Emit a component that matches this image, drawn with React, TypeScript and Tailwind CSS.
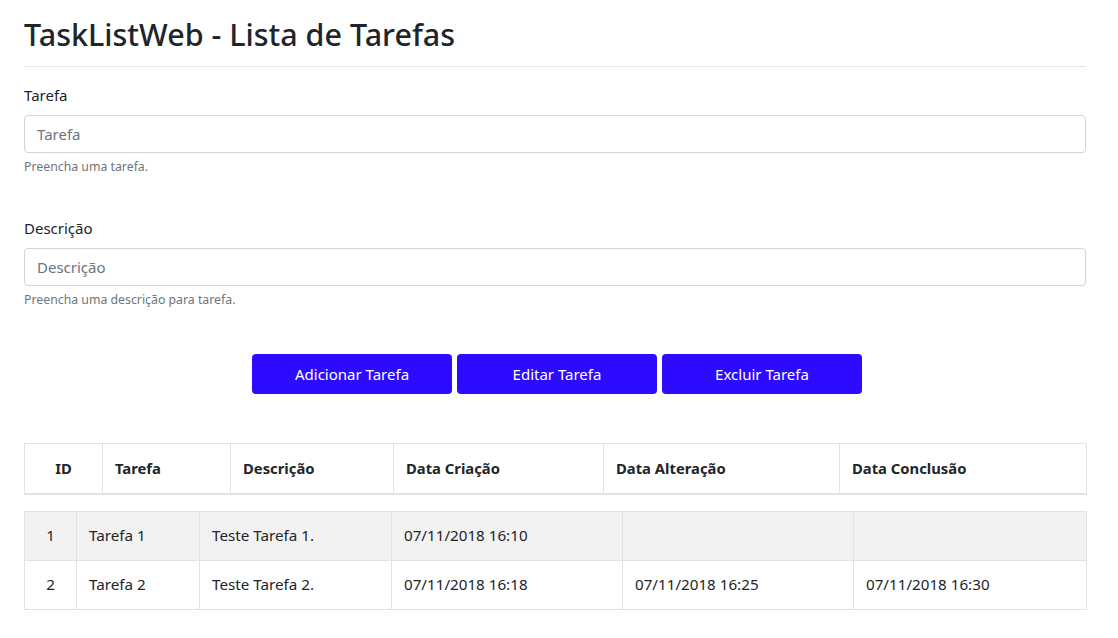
export default function App() {
  const headers = [
    { label: "ID", w: "w-[78px]", center: true },
    { label: "Tarefa", w: "w-[128px]" },
    { label: "Descrição", w: "w-[163px]" },
    { label: "Data Criação", w: "w-[210px]" },
    { label: "Data Alteração", w: "w-[236px]" },
    { label: "Data Conclusão", w: "w-[247px]" },
  ];

  const rows = [
    { id: 1, tarefa: "Tarefa 1", descricao: "Teste Tarefa 1.", criacao: "07/11/2018 16:10", alteracao: "", conclusao: "" },
    { id: 2, tarefa: "Tarefa 2", descricao: "Teste Tarefa 2.", criacao: "07/11/2018 16:18", alteracao: "07/11/2018 16:25", conclusao: "07/11/2018 16:30" },
  ];

  return (
    <div className="min-h-screen bg-white pl-6 pr-8 pt-[15px] text-[#212529] font-['Noto_Sans',sans-serif]">
      <h1 className="text-[30.5px] leading-[38px] font-medium">TaskListWeb - Lista de Tarefas</h1>
      <hr className="mt-[13px] border-t border-[#e6e6e6]" />

      {/* Form */}
      <div className="mt-[16px]">
        <label className="block text-[15px] leading-6 mb-[8px]">Tarefa</label>
        <input
          placeholder="Tarefa"
          className="w-full h-[38px] px-3 rounded border border-[#ced4da] text-[15px] placeholder:text-[#6c757d] outline-none"
        />
        <p className="mt-1 text-[12.3px] leading-[19px] text-[#6c757d]">Preencha uma tarefa.</p>
      </div>

      <div className="mt-[40px]">
        <label className="block text-[15px] leading-6 mb-2">Descrição</label>
        <input
          placeholder="Descrição"
          className="w-full h-[38px] px-3 rounded border border-[#ced4da] text-[15px] placeholder:text-[#6c757d] outline-none"
        />
        <p className="mt-1 text-[12.3px] leading-[19px] text-[#6c757d]">Preencha uma descrição para tarefa.</p>
      </div>

      {/* Buttons */}
      <div className="mt-[45px] flex justify-center gap-[5px] pl-[4px]">
        {["Adicionar Tarefa", "Editar Tarefa", "Excluir Tarefa"].map((b) => (
          <button key={b} className="w-[200px] h-10 rounded bg-[#2d0bff] text-white text-[15px]">
            {b}
          </button>
        ))}
      </div>

      {/* Header table */}
      <table className="mt-[49px] w-full table-fixed border-collapse">
        <thead>
          <tr className="h-[50px]">
            {headers.map((h) => (
              <th
                key={h.label}
                className={`${h.w} border border-[#dee2e6] border-b-2 px-3 font-bold text-[14.8px] ${h.center ? "text-center" : "text-left"}`}
              >
                {h.label}
              </th>
            ))}
          </tr>
        </thead>
      </table>

      {/* Body table */}
      <table className="mt-4 w-full table-fixed border-collapse text-[15.2px]">
        <colgroup>
          <col className="w-[52px]" />
          <col className="w-[123px]" />
          <col className="w-[192px]" />
          <col className="w-[231px]" />
          <col className="w-[231px]" />
          <col className="w-[233px]" />
        </colgroup>
        <tbody>
          {rows.map((r, i) => (
            <tr key={r.id} className={`h-[49px] ${i === 0 ? "bg-[#f2f2f2]" : "bg-white"}`}>
              <td className="border border-[#dee2e6] text-center">{r.id}</td>
              <td className="border border-[#dee2e6] px-3">{r.tarefa}</td>
              <td className="border border-[#dee2e6] px-3">{r.descricao}</td>
              <td className="border border-[#dee2e6] px-3">{r.criacao}</td>
              <td className="border border-[#dee2e6] px-3">{r.alteracao}</td>
              <td className="border border-[#dee2e6] px-3">{r.conclusao}</td>
            </tr>
          ))}
        </tbody>
      </table>
    </div>
  );
}
